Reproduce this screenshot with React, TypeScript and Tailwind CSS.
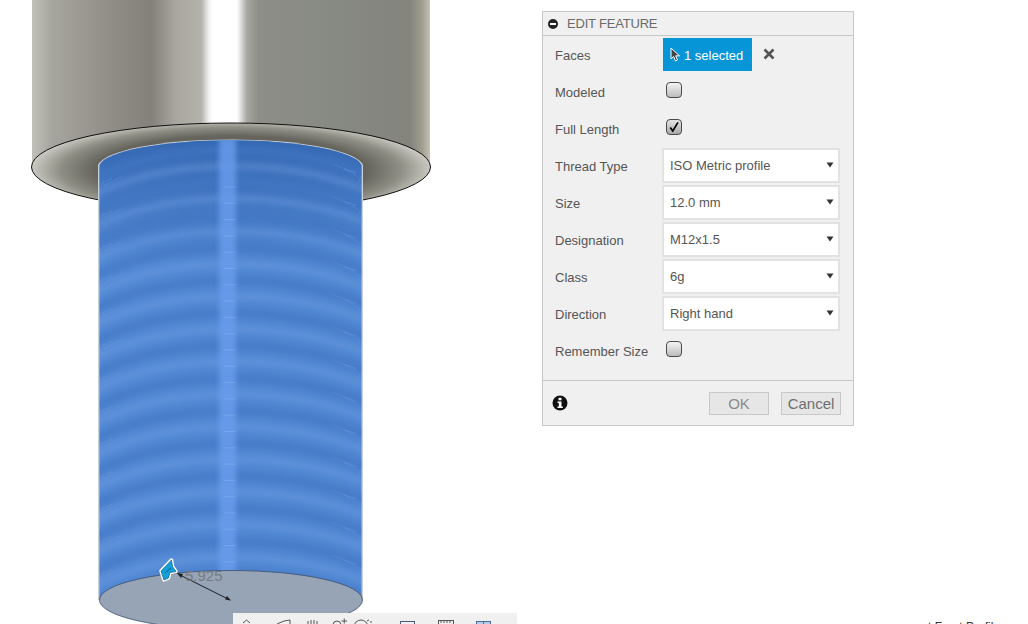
import React from "react";

const font = { fontFamily: '"Liberation Sans", Arial, sans-serif' };

function Arrow() {
  return (
    <svg width="8" height="6" viewBox="0 0 8 6" className="mb-[2px] shrink-0">
      <path d="M0.5 0.5 H7.5 L4 5.5 Z" fill="#333" />
    </svg>
  );
}

function Checkbox({ checked }: { checked?: boolean }) {
  return (
    <div
      className={`mb-[3px] ml-[4px] flex h-[16px] w-[16px] items-center justify-center rounded-[4px] border border-[#4a4a4a] bg-gradient-to-b ${
        checked ? "from-[#e4e4e4] to-[#a8a8a8]" : "from-[#f4f4f4] to-[#bcbcbc]"
      }`}
    >
      {checked && (
        <svg width="12" height="12" viewBox="0 0 12 12">
          <path d="M2.300 6.400 L4.800 10 L10 1.400" fill="none" stroke="#000" strokeWidth="1.700" />
        </svg>
      )}
    </div>
  );
}

function Row({ label, children }: { label: string; children: React.ReactNode }) {
  return (
    <div className="flex h-[37px] items-center pl-[12px]">
      <div className="w-[107px] shrink-0 pt-[1px] text-[13px] leading-none text-[#555]">{label}</div>
      {children}
    </div>
  );
}

function Select({ value }: { value: string }) {
  return (
    <div className="flex h-[35px] w-[178px] items-center justify-between border-2 border-[#e2e2e2] bg-white pl-[6px] pr-[4px] text-[13px] text-[#555]">
      <span className="pt-[1px]">{value}</span>
      <Arrow />
    </div>
  );
}

function Model() {
  const bands = Array.from({ length: 14 }, (_, i) => 150 + i * 32.6);
  const ticks = Array.from({ length: 27 }, (_, i) => 187 + i * 16.3);
  return (
    <svg width="520" height="624" viewBox="0 0 520 624" className="absolute left-0 top-0">
      <defs>
        <linearGradient id="head" x1="32" x2="430" y1="0" y2="0" gradientUnits="userSpaceOnUse">
          <stop offset="0" stopColor="#c2c1b9" />
          <stop offset="0.05" stopColor="#a6a59e" />
          <stop offset="0.2" stopColor="#8f8d86" />
          <stop offset="0.3" stopColor="#84817a" />
          <stop offset="0.36" stopColor="#a8a69f" />
          <stop offset="0.425" stopColor="#b2b1aa" />
          <stop offset="0.445" stopColor="#f2f2f0" />
          <stop offset="0.455" stopColor="#ffffff" />
          <stop offset="0.515" stopColor="#ffffff" />
          <stop offset="0.54" stopColor="#a6a7a1" />
          <stop offset="0.57" stopColor="#8d8e88" />
          <stop offset="0.8" stopColor="#868882" />
          <stop offset="0.95" stopColor="#84847c" />
          <stop offset="0.98" stopColor="#a09d90" />
          <stop offset="1" stopColor="#c6c2b2" />
        </linearGradient>
        <radialGradient id="under" cx="231" cy="170" r="200" gradientUnits="userSpaceOnUse" gradientTransform="translate(0 127.500) scale(1 0.25)">
          <stop offset="0.68" stopColor="#66655d" />
          <stop offset="0.85" stopColor="#8f8e85" />
          <stop offset="1" stopColor="#cbcac2" />
        </radialGradient>
        <linearGradient id="shaft" x1="98" x2="362" y1="0" y2="0" gradientUnits="userSpaceOnUse">
          <stop offset="0" stopColor="#5288d4" />
          <stop offset="1" stopColor="#4f86d1" />
        </linearGradient>
        <linearGradient id="shade" x1="0" x2="0" y1="137" y2="265" gradientUnits="userSpaceOnUse">
          <stop offset="0" stopColor="#2a5ca6" stopOpacity="0.75" />
          <stop offset="1" stopColor="#2a5ca6" stopOpacity="0" />
        </linearGradient>
        <filter id="soft" x="-5%" y="-50%" width="110%" height="200%">
          <feGaussianBlur stdDeviation="3" />
        </filter>
        <filter id="softer" x="-40%" y="-5%" width="180%" height="110%">
          <feGaussianBlur stdDeviation="2.500" />
        </filter>
        <clipPath id="shaftClip">
          <path d="M99.500 165 A131.500 27 0 0 1 361.500 165 V600 H99.500 Z" />
        </clipPath>
      </defs>

      <rect x="32" y="0" width="398" height="167" fill="url(#head)" />
      <ellipse cx="231" cy="167" rx="199.500" ry="44" fill="url(#under)" stroke="#111" strokeWidth="1" />

      <path d="M98 165 A133 28 0 0 1 363 165 V600 H98 Z" fill="#c9d0d8" />
      <g clipPath="url(#shaftClip)">
        <rect x="98" y="130" width="266" height="475" fill="url(#shaft)" />
        <rect x="98" y="130" width="266" height="135" fill="url(#shade)" />
        {bands.map((y) => (
          <g key={y} filter="url(#soft)">
            <path d={`M92 ${y + 30} Q150 ${y} 231 ${y} Q310 ${y} 370 ${y + 26}`} fill="none" stroke="#4377c4" strokeWidth="9" opacity="0.65" />
            <path d={`M92 ${y + 46} Q150 ${y + 16} 231 ${y + 16} Q310 ${y + 16} 370 ${y + 42}`} fill="none" stroke="#74a3e4" strokeWidth="6" opacity="0.45" />
          </g>
        ))}
        {bands.map((y) => (
          <g key={`r${y}`} fill="none" stroke="#7aa5e0" strokeWidth="0.800" opacity="0.3">
            <path d={`M100 ${y + 34} L112 ${y + 28} L104 ${y + 36} L122 ${y + 26} M100 ${y + 42} L104 ${y + 30}`} />
            <path d={`M360 ${y + 28} L344 ${y + 19} L356 ${y + 23} L332 ${y + 14} M358 ${y + 34} L361 ${y + 26}`} />
          </g>
        ))}
        <rect x="219" y="130" width="17" height="475" fill="#6a9eee" opacity="0.8" filter="url(#softer)" />
        {ticks.map((y) => (
          <path key={y} d={`M224 ${y} H236`} stroke="#93bcf5" strokeWidth="1" opacity="0.35" />
        ))}
        <path d="M216 137.500 H240" stroke="#1d4f9c" strokeWidth="1.500" />
      </g>

      <ellipse cx="231" cy="600" rx="131.500" ry="29.500" fill="#96a4b5" stroke="#3e4f6b" strokeWidth="0.800" />

      <line x1="178" y1="574" x2="230" y2="600" stroke="#1c2026" strokeWidth="1" />
      <path d="M231 600.500 L225 599.600 L227 596 Z" fill="#1c2026" />
      <path d="M177 573 L183 574 L181 578 Z" fill="#1c2026" />
      <text x="185" y="581" fontSize="15" fill="#777b80" fontFamily="Liberation Sans, Arial, sans-serif">5.925</text>

      <path d="M171.500 560 L172.500 566.500 L176 571.500 L170 572.500 L168.500 578 L164 580 L161 571 Z" fill="#149fd8" stroke="#ffffff" strokeWidth="3.500" strokeLinejoin="round" />
      <path d="M171.500 560 L172.500 566.500 L176 571.500 L170 572.500 L168.500 578 L164 580 L161 571 Z" fill="#149fd8" stroke="#0c5f85" strokeWidth="0.700" strokeLinejoin="round" />
      <path d="M165 573 L171 568" stroke="#0c5f85" strokeWidth="1" />
    </svg>
  );
}

function Toolbar() {
  return (
    <div className="absolute left-[233px] top-[613px] h-[11px] w-[284px] overflow-hidden bg-[#f0f0f0]">
      <svg width="284" height="11" viewBox="0 0 284 11" fill="none" stroke="#555" strokeWidth="1">
        <path d="M10 10 L13.500 7 L17 10" />
        <path d="M44 11 L51 8 L57 7 V11" />
        <path d="M75 11 V8 M78 11 V7 M81 11 V7 M84 11 V8" />
        <circle cx="104" cy="12" r="4" />
        <path d="M108.500 8 H114 M111.250 5.500 V10.500" />
        <circle cx="128" cy="14" r="7" />
        <path d="M134 8 L136 7 M137 9 H139" />
        <rect x="167.500" y="8.500" width="14" height="8" stroke="#4a5a7a" />
        <rect x="205.500" y="7.500" width="15" height="8" />
        <path d="M208 7 V10 M211 7 V10 M214 7 V10 M217 7 V10" />
        <rect x="243.500" y="8.500" width="14" height="8" fill="#b8cde8" stroke="#4a6a9a" />
        <path d="M250.500 8 V11" stroke="#4a6a9a" />
      </svg>
    </div>
  );
}

export default function App() {
  return (
    <div className="relative h-[624px] w-[1028px] overflow-hidden bg-white" style={font}>
      <Model />
      <Toolbar />

      <div className="absolute left-[928px] top-[620px] whitespace-nowrap text-[12px] leading-[14px] text-[#333]">t Front Profile</div>

      <div className="absolute left-[542px] top-[11px] w-[312px] border border-[#c8c8c8] bg-[#f0f0f0]">
        <div className="flex h-[24px] items-center border-b border-[#c8c8c8] pl-[5px]">
          <svg width="10" height="10" viewBox="0 0 10 10" className="shrink-0">
            <circle cx="5" cy="5" r="5" fill="#222" />
            <rect x="2" y="4" width="6" height="2" fill="#fff" />
          </svg>
          <span className="ml-[9px] text-[13px] tracking-[-0.2px] text-[#6a6a6a]">EDIT FEATURE</span>
        </div>
        <div className="pb-[11px]">
          <Row label="Faces">
            <div className="ml-[1px] flex h-[33px] w-[89px] items-center bg-[#0696d7] pl-[7px] text-[13px] text-white">
              <svg width="11" height="15" viewBox="0 0 11 15" className="shrink-0">
                <path d="M1 1 V12 L3.600 9.500 L5.500 14 L7.500 13 L5.700 8.800 L9.500 8.800 Z" fill="#444" stroke="#fff" strokeWidth="1" />
              </svg>
              <span className="ml-[3px] pt-[2px]">1 selected</span>
            </div>
            <svg width="12" height="12" viewBox="0 0 12 12" className="mb-[2px] ml-[11px] shrink-0">
              <path d="M1.500 1.500 L10.500 10.500 M10.500 1.500 L1.500 10.500" stroke="#555" strokeWidth="2.600" />
            </svg>
          </Row>
          <Row label="Modeled"><Checkbox /></Row>
          <Row label="Full Length"><Checkbox checked /></Row>
          <Row label="Thread Type"><Select value="ISO Metric profile" /></Row>
          <Row label="Size"><Select value="12.0 mm" /></Row>
          <Row label="Designation"><Select value="M12x1.5" /></Row>
          <Row label="Class"><Select value="6g" /></Row>
          <Row label="Direction"><Select value="Right hand" /></Row>
          <Row label="Remember Size"><Checkbox /></Row>
        </div>
        <div className="flex h-[45px] items-center justify-between border-t border-[#c8c8c8] pl-[9px] pr-[12px]">
          <svg width="16" height="16" viewBox="0 0 16 16" className="shrink-0">
            <circle cx="8" cy="8" r="7.500" fill="#111" />
            <rect x="6.500" y="2.800" width="3" height="2.500" fill="#fff" />
            <path d="M5.500 6.500 H9.500 V11.500 H10.800 V13 H5.500 V11.500 H6.800 V8 H5.500 Z" fill="#fff" />
          </svg>
          <div className="flex items-center gap-[12px] text-[15px] leading-none">
            <div className="flex h-[23px] w-[60px] items-center justify-center border border-[#c8c8c8] bg-[#e6e6e6] text-[#8a8a8a]">OK</div>
            <div className="flex h-[23px] w-[60px] items-center justify-center border border-[#c8c8c8] bg-[#e6e6e6] text-[#6e6e6e]">Cancel</div>
          </div>
        </div>
      </div>
    </div>
  );
}
